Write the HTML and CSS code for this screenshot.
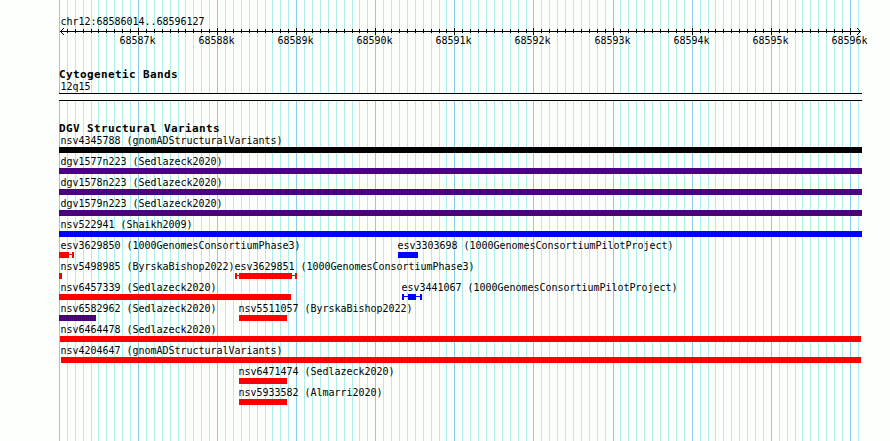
FILE: index.html
```html
<!DOCTYPE html>
<html lang="en">
<head>
<meta charset="utf-8">
<title>chr12:68586014..68596127</title>
<link rel="stylesheet" href="styles.css">
</head>
<body>
<main class="browser">
  <svg class="grid" id="grid" width="831" height="441"></svg>
  <header class="ruler">
    <div class="region">chr12:68586014..68596127</div>
    <svg class="scale" id="scale" width="831" height="22"></svg>
  </header>
  <section class="cyto">
    <h2>Cytogenetic Bands</h2>
    <div class="label">12q15</div>
    <div class="band"></div>
  </section>
  <section class="variants">
    <h2>DGV Structural Variants</h2>
    <div id="tracks"></div>
  </section>
</main>
<script src="main.js"></script>
</body>
</html>
```
FILE: styles.css
```css
* { box-sizing: border-box; }
body {
  margin: 0;
  background: #fdfffc;
  color: #000;
  font: 10px/13px "DejaVu Sans Mono", "Liberation Mono", monospace;
}
.browser {
  position: relative;
  width: 803px;
  height: 441px;
  margin-left: 59px;
}
.grid { position: absolute; top: 0; left: 0; z-index: -1; }
.grid, .scale { display: block; overflow: visible; shape-rendering: crispEdges; }
.minor { fill: #afeeee; }
.major { fill: #87ceeb; }
.ruler { height: 68px; padding-top: 15px; }
.region, .label { padding-left: 1.4px; white-space: pre; letter-spacing: -0.02px; height: 13px; }
.scale { margin-top: 1px; }
.scale text { font-size: 10px; letter-spacing: -0.02px; }
h2 {
  margin: 0;
  height: 12px;
  font-size: 11px;
  line-height: 14px;
  letter-spacing: 0.378px;
  white-space: pre;
}
.band {
  height: 8px;
  border: solid #000;
  border-width: 1px 0;
  background: #fdfffc;
}
.variants { padding-top: 21px; }
.row { display: flex; height: 21px; }
.feature { flex: none; }
.glyph { display: flex; align-items: stretch; height: 6px; color: red; }
.body { background: currentColor; }
.cap { width: 2px; background: currentColor; }
.line { height: 1px; margin-top: 2px; background: currentColor; }
.black { color: #000; }
.purple { color: #4b0082; }
.blue { color: #00f; }
```
FILE: main.js
```js
const LEFT = 59;
const tickX = i => Math.floor(59.38 + 7.91 * i) - LEFT;
const rect = (x, y, w, h, c = "") =>
  `<rect class="${c}" x="${x}" y="${y}" width="${w}" height="${h}"/>`;

let grid = "", scale = rect(1, 2, 801, 1);
for (let i = 0; i <= 101; i++) {
  const x = tickX(i), major = i % 10 === 0;
  grid += rect(x, 0, 1, 441, major ? "major" : "minor");
  if (i === 0) continue;
  scale += major ? rect(x, -1, 1, 7) : i < 101 ? rect(x, 0, 1, 4) : "";
  if (major) scale += `<text x="${x - 18.6}" y="15">${68586 + i / 10}k</text>`;
}
for (let d = 1; d <= 3; d++) {
  scale += rect(1 + d, 2 - d, 1, 1) + rect(1 + d, 2 + d, 1, 1);
  scale += rect(801 - d, 2 - d, 1, 1) + rect(801 - d, 2 + d, 1, 1);
}
document.getElementById("grid").innerHTML = grid;
document.getElementById("scale").innerHTML = scale;

// Feature: name, source, colour, column start, glyph parts as [kind, start, end].
const full = [["body", 59, 862]];
const rows = [
  [["nsv4345788", "gnomADStructuralVariants", "black", 59, full]],
  [["dgv1577n223", "Sedlazeck2020", "purple", 59, full]],
  [["dgv1578n223", "Sedlazeck2020", "purple", 59, full]],
  [["dgv1579n223", "Sedlazeck2020", "purple", 59, full]],
  [["nsv522941", "Shaikh2009", "blue", 59, full]],
  [["esv3629850", "1000GenomesConsortiumPhase3", "red", 59, [["body", 59, 69], ["line", 69, 72], ["cap", 72, 74]]],
   ["esv3303698", "1000GenomesConsortiumPilotProject", "blue", 396, [["body", 398, 418]]]],
  [["nsv5498985", "ByrskaBishop2022", "red", 59, [["body", 59, 62]]],
   ["esv3629851", "1000GenomesConsortiumPhase3", "red", 233, [["cap", 235, 237], ["line", 237, 239], ["body", 239, 292], ["line", 292, 295], ["cap", 295, 297]]]],
  [["nsv6457339", "Sedlazeck2020", "red", 59, [["body", 59, 291]]],
   ["esv3441067", "1000GenomesConsortiumPilotProject", "blue", 400, [["cap", 402, 404], ["line", 404, 408], ["body", 408, 416], ["line", 416, 420], ["cap", 420, 422]]]],
  [["nsv6582962", "Sedlazeck2020", "purple", 59, [["body", 59, 96]]],
   ["nsv5511057", "ByrskaBishop2022", "red", 237, [["body", 239, 287]]]],
  [["nsv6464478", "Sedlazeck2020", "red", 59, [["body", 60, 861]]]],
  [["nsv4204647", "gnomADStructuralVariants", "red", 59, [["body", 61, 861]]]],
  [["nsv6471474", "Sedlazeck2020", "red", 237, [["body", 239, 287]]]],
  [["nsv5933582", "Almarri2020", "red", 237, [["body", 239, 287]]]]
];
document.getElementById("tracks").innerHTML = rows.map(row =>
  `<div class="row" style="padding-left:${row[0][3] - LEFT}px">` + row.map(([name, src, color, start, parts], i) => {
    const end = row[i + 1] ? row[i + 1][3] : 862;
    return `<div class="feature" style="width:${end - start}px"><div class="label">${name} (${src})</div>` +
      `<div class="glyph ${color}" style="padding-left:${parts[0][1] - start}px">` +
      parts.map(([k, a, b]) => `<div class="${k}" style="width:${b - a}px"></div>`).join("") +
      `</div></div>`;
  }).join("") + `</div>`).join("");
```
